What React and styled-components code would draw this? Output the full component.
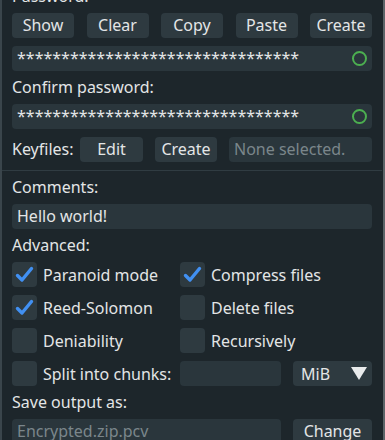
import React from 'react';
import styled, { createGlobalStyle } from 'styled-components';

const GlobalStyle = createGlobalStyle`
  html, body {
    margin: 0;
    padding: 0;
    background: #1d262b;
    overflow: hidden;
  }
`;

const Window = styled.div`
  width: 385px;
  height: 440px;
  box-sizing: border-box;
  overflow: hidden;
  border-left: 2px solid #3a454b;
  border-right: 2px solid #5b6468;
  background: #1d262b;
  font-family: "Noto Sans", "Open Sans", sans-serif;
  font-size: 16px;
  color: #e3e5e6;
`;

const Content = styled.div`
  display: flex;
  flex-direction: column;
  gap: 8px;
  margin-top: -12px;
  padding: 0 11px 0 10px;
`;

const Label = styled.div`
  height: 17px;
  line-height: 17px;
  white-space: nowrap;
`;

const Row = styled.div`
  display: flex;
  align-items: center;
  gap: ${(p) => p.$gap || 12}px;
  justify-content: ${(p) => p.$spread ? 'space-between' : 'flex-start'};
`;

const Button = styled.button`
  height: 25px;
  width: ${(p) => p.$w || 62}px;
  flex: none;
  border: none;
  border-radius: 4px;
  background: #2e3a40;
  color: #e3e5e6;
  font: inherit;
  padding: 0;
  line-height: 25px;
`;

const Field = styled.div`
  position: relative;
  height: 25px;
  flex: ${(p) => p.$w ? 'none' : 1};
  width: ${(p) => p.$w ? `${p.$w}px` : 'auto'};
  border-radius: 4px;
  background: #2a363c;
  padding: 0 5px;
  line-height: 25px;
  color: ${(p) => p.$hint ? '#7b868b' : '#e3e5e6'};
  white-space: nowrap;
  overflow: hidden;
`;

const Ring = styled.span`
  position: absolute;
  right: 5px;
  top: 5px;
  width: 11px;
  height: 11px;
  border-radius: 50%;
  border: 2px solid #4caf50;
`;

const Separator = styled.div`
  height: 1px;
  background: #303c42;
  margin: 0 -10px;
`;

const CheckGrid = styled.div`
  display: grid;
  grid-template-columns: 168px 1fr;
  row-gap: 8px;
`;

const Check = styled.div`
  display: flex;
  align-items: center;
  gap: 6px;
  height: 25px;
  white-space: nowrap;
`;

const Box = styled.span`
  width: 25px;
  height: 25px;
  border-radius: 4px;
  background: #2e3a40;
  display: flex;
  align-items: center;
  justify-content: center;
  flex: none;
`;

const Combo = styled.div`
  height: 25px;
  width: 79px;
  flex: none;
  border-radius: 4px;
  background: #2e3a40;
  display: flex;
  align-items: center;
  justify-content: space-between;
  padding: 0 5px 0 8px;
  box-sizing: border-box;
`;

const CheckMark = () => (
  <svg width="19" height="17" viewBox="0 0 19 17">
    <path d="M2.5 9.5 L7 14 L16.5 2.5" fill="none" stroke="#4190f2" strokeWidth="3.4" strokeLinecap="round" strokeLinejoin="round" />
  </svg>
);

const CheckItem = ({ checked, children }) => (
  <Check>
    <Box>{checked && <CheckMark />}</Box>
    {children}
  </Check>
);

const stars = '*'.repeat(32);

const App = () => (
  <Window>
    <GlobalStyle />
    <Content>
      <Label>Password:</Label>
      <Row $spread>
        <Button>Show</Button>
        <Button>Clear</Button>
        <Button>Copy</Button>
        <Button>Paste</Button>
        <Button>Create</Button>
      </Row>
      <Row>
        <Field>{stars}<Ring /></Field>
      </Row>
      <Label>Confirm password:</Label>
      <Row>
        <Field>{stars}<Ring /></Field>
      </Row>
      <Row>
        <Label style={{ width: 56 }}>Keyfiles:</Label>
        <Button $w={63}>Edit</Button>
        <Button $w={62}>Create</Button>
        <Field $hint>None selected.</Field>
      </Row>
      <Separator />
      <Label>Comments:</Label>
      <Row>
        <Field>Hello world!</Field>
      </Row>
      <Label>Advanced:</Label>
      <CheckGrid>
        <CheckItem checked>Paranoid mode</CheckItem>
        <CheckItem checked>Compress files</CheckItem>
        <CheckItem checked>Reed-Solomon</CheckItem>
        <CheckItem>Delete files</CheckItem>
        <CheckItem>Deniability</CheckItem>
        <CheckItem>Recursively</CheckItem>
      </CheckGrid>
      <Row>
        <Check style={{ width: 156 }}>
          <Box />
          Split into chunks:
        </Check>
        <Field $w={91} />
        <Combo>
          MiB
          <svg width="16" height="13" viewBox="0 0 16 13">
            <path d="M0 0 H16 L8 13 Z" fill="#e9ebec" />
          </svg>
        </Combo>
      </Row>
      <Label>Save output as:</Label>
      <Row>
        <Field $hint>Encrypted.zip.pcv</Field>
        <Button $w={79}>Change</Button>
      </Row>
    </Content>
  </Window>
);

export default App;
